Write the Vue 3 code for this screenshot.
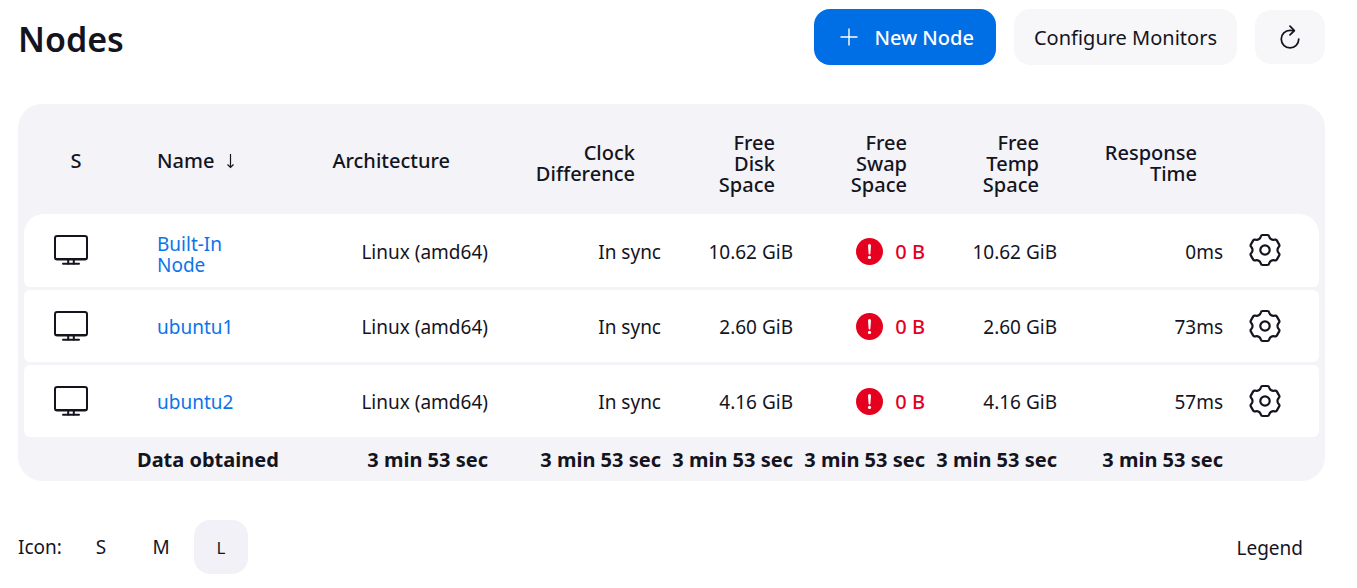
<script setup>
import { ref } from 'vue'

const columns = [
  { id: 'arch', lines: ['Architecture'] },
  { id: 'clock', lines: ['Clock', 'Difference'] },
  { id: 'disk', lines: ['Free', 'Disk', 'Space'] },
  { id: 'swap', lines: ['Free', 'Swap', 'Space'] },
  { id: 'temp', lines: ['Free', 'Temp', 'Space'] },
  { id: 'response', lines: ['Response', 'Time'] },
]

const nodes = [
  { name: 'Built-In Node', disk: '10.62 GiB', response: '0ms' },
  { name: 'ubuntu1', disk: '2.60 GiB', response: '73ms' },
  { name: 'ubuntu2', disk: '4.16 GiB', response: '57ms' },
]

const sizes = ['S', 'M', 'L']
const size = ref('L')

// One gear tooth, repeated six times around the centre.
function buildGear() {
  const out = []
  for (let i = 0; i < 6; i++) {
    const a = (i * Math.PI) / 3
    const p = (x, y) =>
      `${(x * Math.cos(a) - y * Math.sin(a)).toFixed(2)} ${(x * Math.sin(a) + y * Math.cos(a)).toFixed(2)}`
    out.push(
      `${i === 0 ? 'M' : 'L'}${p(-6.2, -10.8)}`,
      `Q${p(-4.8, -11.6)} ${p(-4.2, -13.4)}`,
      `Q${p(-3.8, -15)} ${p(-2.4, -15)}`,
      `L${p(2.4, -15)}`,
      `Q${p(3.8, -15)} ${p(4.2, -13.4)}`,
      `Q${p(4.8, -11.6)} ${p(6.2, -10.8)}`,
    )
  }
  return out.join('') + 'Z'
}
const gear = buildGear()
</script>

<template>
  <main class="page">
    <header class="app-bar">
      <h1>Nodes</h1>
      <div class="actions">
        <button type="button" class="btn primary">
          <svg width="18" height="18" viewBox="0 0 18 18" aria-hidden="true">
            <path d="M9 .5v17M.5 9h17" stroke="currentColor" stroke-width="1.4" fill="none" />
          </svg>
          New Node
        </button>
        <button type="button" class="btn">Configure Monitors</button>
        <button type="button" class="btn refresh" aria-label="Refresh">
          <svg width="28" height="28" viewBox="0 0 512 512" aria-hidden="true">
            <g fill="none" stroke="currentColor" stroke-width="32" stroke-linecap="round">
              <path d="M320 146s24.36-12-64-12a160 160 0 1 0 160 160" stroke-miterlimit="10" />
              <path d="M256 58l80 80-80 80" stroke-linejoin="round" />
            </g>
          </svg>
        </button>
      </div>
    </header>

    <div class="table-box">
      <table>
        <colgroup>
          <col class="c-status" />
          <col class="c-name" />
          <col class="c-arch" />
          <col class="c-clock" />
          <col class="c-space" />
          <col class="c-space" />
          <col class="c-space" />
          <col class="c-response" />
          <col class="c-gear" />
        </colgroup>
        <thead>
          <tr>
            <th class="status"><button type="button" class="sort">S</button></th>
            <th class="name">
              <button type="button" class="sort">
                Name
                <svg width="9" height="16" viewBox="0 0 9 16" aria-hidden="true">
                  <path d="M4.5 1v13M1.5 11.5l3 3 3-3" fill="none" stroke="currentColor" stroke-width="1.2" />
                </svg>
              </button>
            </th>
            <th v-for="c in columns" :key="c.id" :class="c.id">
              <button type="button" class="sort stacked">
                <span v-for="l in c.lines" :key="l">{{ l }}</span>
              </button>
            </th>
            <th></th>
          </tr>
        </thead>
        <tbody>
          <tr v-for="n in nodes" :key="n.name">
            <td class="status">
              <svg width="36" height="32" viewBox="0 0 36 32" aria-hidden="true">
                <g fill="none" stroke="currentColor" stroke-width="2" stroke-linecap="round" stroke-linejoin="round">
                  <rect x="2" y="2" width="32" height="23.5" rx="2.2" />
                  <path d="M3 25h30M15.2 26v4M20.8 26v4M10 29.8h16" />
                </g>
              </svg>
            </td>
            <td class="name"><a href="#">{{ n.name }}</a></td>
            <td>Linux (amd64)</td>
            <td>In sync</td>
            <td>{{ n.disk }}</td>
            <td class="swap">
              <span class="alert">
                <svg width="27" height="27" viewBox="0 0 27 27" aria-hidden="true">
                  <circle cx="13.5" cy="13.5" r="13.5" fill="#e6001f" />
                  <path d="M12 7.6a1.5 1.5 0 0 1 3 0l-.6 8a.9.9 0 0 1-1.8 0z" fill="#fff" />
                  <circle cx="13.5" cy="19.4" r="1.6" fill="#fff" />
                </svg>
                0 B
              </span>
            </td>
            <td>{{ n.disk }}</td>
            <td>{{ n.response }}</td>
            <td class="config">
              <button type="button" class="gear" :aria-label="'Configure ' + n.name">
                <svg width="34" height="34" viewBox="-17 -17 34 34" aria-hidden="true">
                  <g fill="none" stroke="currentColor" stroke-width="2.2" stroke-linejoin="round">
                    <path :d="gear" />
                    <circle r="4.7" />
                  </g>
                </svg>
              </button>
            </td>
          </tr>
        </tbody>
        <tfoot>
          <tr>
            <th></th>
            <th class="name">Data obtained</th>
            <th v-for="c in columns" :key="c.id">3 min 53 sec</th>
            <th></th>
          </tr>
        </tfoot>
      </table>
    </div>

    <footer class="bottom">
      <div class="sizes">
        <span class="label">Icon:</span>
        <button
          v-for="s in sizes"
          :key="s"
          type="button"
          class="size"
          :class="{ active: s === size }"
          @click="size = s"
        >{{ s }}</button>
      </div>
      <button type="button" class="legend">Legend</button>
    </footer>
  </main>
</template>

<style>
body {
  margin: 0;
  background: #fff;
}
</style>

<style scoped>
.page {
  padding: 9px 32px 0 18px;
  color: #14141f;
  font-family: "Noto Sans", "Open Sans", sans-serif;
  font-size: 19px;
  line-height: 21px;
}
button {
  margin: 0;
  padding: 0;
  border: 0;
  background: none;
  color: inherit;
  font: inherit;
  cursor: pointer;
}
svg {
  display: block;
  flex: none;
}
.app-bar {
  display: flex;
  align-items: center;
  justify-content: space-between;
  margin-bottom: 39px;
}
h1 {
  margin: 0;
  padding-top: 4px;
  font-size: 34px;
  line-height: 48px;
  font-weight: 600;
}
.actions {
  display: flex;
  align-items: center;
  gap: 18px;
}
.btn {
  display: flex;
  align-items: center;
  justify-content: center;
  gap: 16px;
  height: 56px;
  padding: 0 20px;
  border-radius: 16px;
  background: #f7f7fa;
  font-size: 20px;
  white-space: nowrap;
}
.btn.primary {
  padding: 0 22px 0 26px;
  background: #006fe6;
  color: #fff;
  font-weight: 500;
}
.btn.refresh {
  width: 70px;
  height: 54px;
  padding: 0;
}
.table-box {
  padding: 3px 6px;
  border-radius: 24px;
  background: #f3f3f8;
}
table {
  width: 100%;
  table-layout: fixed;
  border-collapse: separate;
  border-spacing: 0 3px;
}
.c-status { width: 113px; }
.c-name { width: 148px; }
.c-arch { width: 207px; }
.c-clock { width: 173px; }
.c-space { width: 132px; }
.c-response { width: 166px; }
.c-gear { width: 92px; }
th,
td {
  box-sizing: border-box;
  padding: 0 4px 0 0;
  text-align: right;
  white-space: nowrap;
}
th { font-size: 20px; }
thead th {
  height: 101px;
  padding-top: 5px;
  font-weight: 500;
}
thead .clock,
thead .response { padding-right: 30px; }
thead .disk,
thead .swap,
thead .temp { padding-right: 22px; }
thead .arch {
  padding: 0 42px 2px 0;
}
thead .name {
  padding: 0 0 2px 20px;
  text-align: left;
}
thead .status {
  padding: 0 9px 2px 0;
  text-align: center;
}
.sort {
  display: inline-flex;
  align-items: center;
  gap: 12px;
  vertical-align: middle;
}
.sort.stacked {
  flex-direction: column;
  align-items: flex-end;
  gap: 0;
}
tbody td {
  height: 72px;
  padding-top: 3px;
  background: #fff;
}
tbody tr:first-child td { height: 73px; }
tbody .status {
  padding: 0 0 1px 29px;
}
tbody .name {
  padding-left: 20px;
  padding-right: 52px;
  text-align: left;
  white-space: normal;
}
tbody tr:first-child .name { padding-top: 9px; }
tbody .swap { padding-top: 1px; }
tbody .config {
  padding: 0 0 1px 21px;
  text-align: left;
}
a {
  color: #0b74e8;
  text-decoration: none;
}
tbody td:first-child { border-radius: 6px 0 0 6px; }
tbody td:last-child { border-radius: 0 6px 6px 0; }
tbody tr:first-child td:first-child { border-top-left-radius: 20px; }
tbody tr:first-child td:last-child { border-top-right-radius: 20px; }
.alert {
  display: inline-flex;
  align-items: center;
  gap: 12px;
  vertical-align: middle;
  color: #e6001f;
  font-size: 20px;
  font-weight: 500;
}
.gear { display: block; }
tfoot th {
  height: 35px;
  padding-top: 4px;
  font-weight: 700;
}
tfoot .name { padding-right: 8px; }
.bottom {
  display: flex;
  align-items: center;
  justify-content: space-between;
  margin-top: 39px;
}
.sizes {
  display: flex;
  align-items: center;
  gap: 6px;
}
.label { width: 50px; }
.size {
  width: 54px;
  height: 54px;
  border-radius: 16px;
}
.size.active {
  background: #f2f1f8;
  font-size: 17px;
}
.legend {
  margin-right: 22px;
  padding-top: 2px;
}
</style>
